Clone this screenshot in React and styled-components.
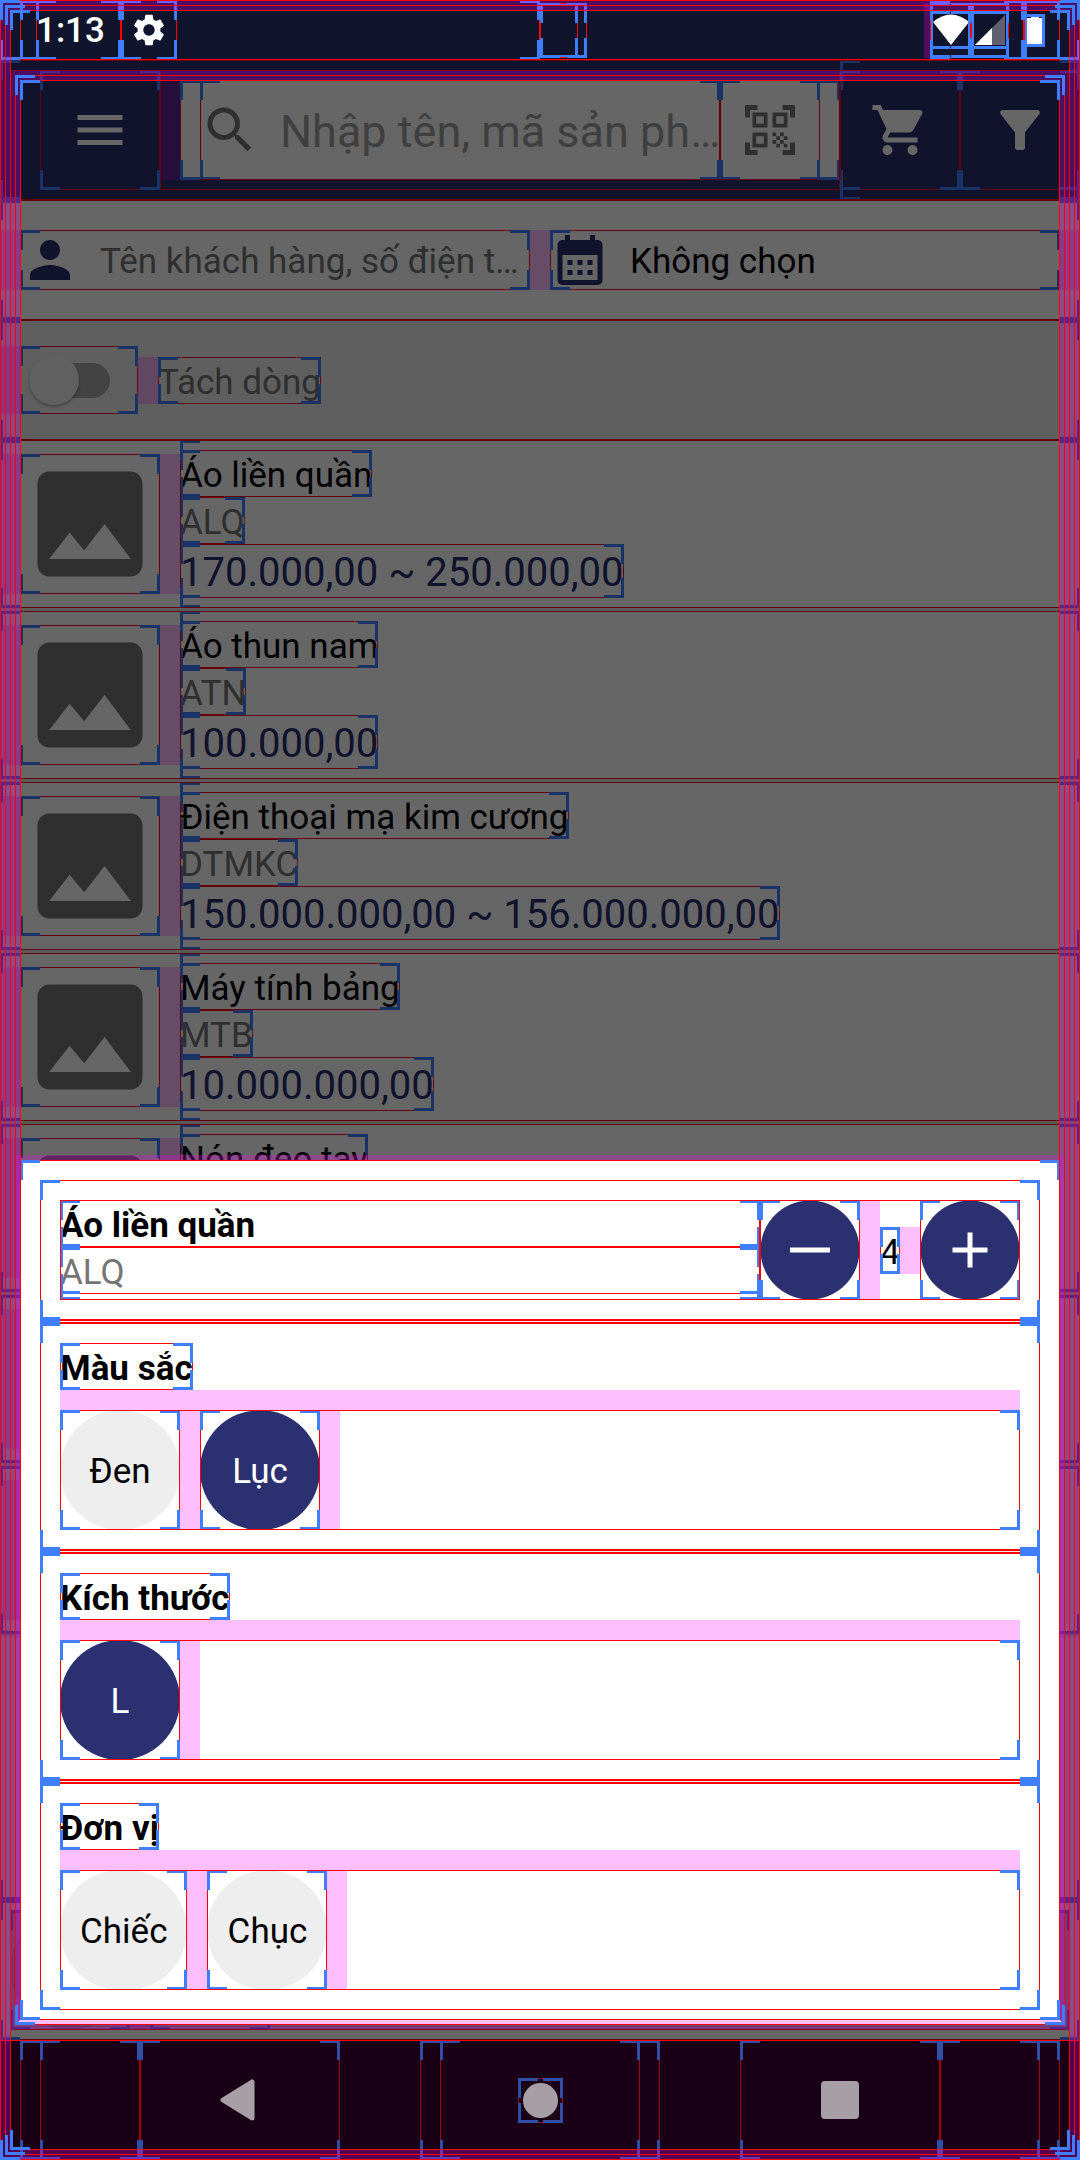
import React from 'react';
import styled, { css, createGlobalStyle } from 'styled-components';
import {
  MdMenu,
  MdSearch,
  MdQrCodeScanner,
  MdShoppingCart,
  MdFilterAlt,
  MdPerson,
  MdCalendarMonth,
  MdImage,
  MdAdd,
  MdSettings,
} from 'react-icons/md';

const NAVY = '#2b3071';
const GREY = '#757575';
const PINK = 'rgba(255, 0, 255, 0.25)';
const RED = '#ff0000';
const BLUE = '#3f7fff';

const patch = (color, place, size) =>
  `linear-gradient(${color}, ${color}) ${place} / ${size} no-repeat`;

const edges = (red) => [
  patch(red, 'left top', '100% 1px'),
  patch(red, 'left bottom', '100% 1px'),
  patch(red, 'left top', '1px 100%'),
  patch(red, 'right top', '1px 100%'),
];

const corners = ['left top', 'right top', 'left bottom', 'right bottom'].flatMap((place) => [
  patch(BLUE, place, '20px 3px'),
  patch(BLUE, place, '3px 20px'),
]);

/* Debug outline of a view: thin red edges with blue corner marks. */
const bounds = css`
  position: relative;
  &::after {
    content: '';
    position: absolute;
    inset: 0;
    pointer-events: none;
    background: ${[...corners, ...edges(RED)].join(', ')};
  }
`;

/* Outline with no corner marks. */
const outline = (red) => css`
  position: relative;
  &::after {
    content: '';
    position: absolute;
    inset: 0;
    pointer-events: none;
    background: ${edges(red).join(', ')};
  }
`;

const Global = createGlobalStyle`
  *, *::before, *::after { box-sizing: border-box; }
  body {
    margin: 0;
    background: #fff;
    color: #000;
    font: 400 35px/47px Roboto, "Noto Sans", sans-serif;
  }
  button, input {
    margin: 0;
    padding: 0;
    border: 0;
    background: none;
    color: inherit;
    font: inherit;
  }
  h2, p, ul { margin: 0; padding: 0; font: inherit; list-style: none; }
  svg { display: block; flex: none; }
`;

const Screen = styled.div`
  position: relative;
  display: grid;
  grid-template-rows: 60px minmax(0, 1fr) 120px;
  height: 100vh;
  overflow: hidden;
`;

/* ---------- status bar ---------- */

const StatusBar = styled.header`
  ${bounds}
  display: flex;
  align-items: center;
  padding: 0 20px;
  background: #11142d;
  color: #fff;
`;

const StatusLeft = styled.div`
  ${bounds}
  display: flex;
  flex: none;
  width: 50%;
  height: 60px;
  padding-left: 16px;
`;

const Clock = styled.div`
  ${bounds}
  width: 85px;
  font-weight: 500;
  line-height: 61px;
`;

const StatusIcon = styled.div`
  ${bounds}
  display: flex;
  align-items: center;
  justify-content: center;
  width: ${(p) => p.$width}px;
  height: ${(p) => p.$height}px;
`;

const Cutout = styled(StatusIcon)`
  justify-content: flex-start;
`;

const StatusRight = styled.div`
  display: flex;
  flex: 1;
  align-items: center;
  justify-content: flex-end;
`;

const SystemIcons = styled.div`
  ${bounds}
  display: flex;
  align-items: center;
  height: 60px;
  padding-right: 15px;
`;

const BatterySlot = styled.div`
  ${bounds}
  display: flex;
  align-items: center;
  width: 36px;
  height: 60px;
`;

/* ---------- page ---------- */

const Page = styled.main`
  position: relative;
  display: flex;
  flex-direction: column;
  min-height: 0;
  background: #fff;
`;

const Scrim = styled.div`
  position: absolute;
  inset: 0;
  background: rgba(0, 0, 0, 0.6);
`;

const Margin = styled.div`
  flex: none;
  width: ${(p) => (p.$width ? `${p.$width}px` : 'auto')};
  height: ${(p) => p.$height}px;
  background: ${PINK};
`;

const Toolbar = styled.div`
  ${bounds}
  display: flex;
  flex: none;
  align-items: center;
  height: 140px;
  padding-left: 40px;
  background: ${NAVY};
  color: #fff;
`;

const ToolButton = styled.button`
  ${bounds}
  display: flex;
  align-items: center;
  justify-content: center;
  width: ${(p) => p.$width || 120}px;
  height: ${(p) => p.$height || 120}px;
`;

const SearchArea = styled.div`
  ${outline(RED)}
  display: flex;
  flex: 1;
  align-items: center;
  min-width: 0;
  height: 120px;
`;

const SearchBox = styled.div`
  ${bounds}
  display: flex;
  flex: 1;
  min-width: 0;
  height: 100px;
  padding: 0 20px;
  background: #fff;
  color: ${GREY};
`;

const Field = styled.label`
  ${bounds}
  display: flex;
  flex: 1;
  align-items: center;
  gap: 20px;
  min-width: 0;
`;

const TextInput = styled.input`
  flex: 1;
  width: 100%;
  min-width: 0;
  height: 60px;
  margin-right: ${(p) => (p.$large ? -8 : 0)}px;
  padding-top: 2px;
  font-size: ${(p) => (p.$large ? 45 : 35)}px;
  text-overflow: ellipsis;
  outline: none;
  &::placeholder {
    color: ${(p) => (p.$large ? '#9e9e9e' : GREY)};
    opacity: 1;
  }
`;

const ToolGroup = styled.div`
  ${bounds}
  display: flex;
  align-items: center;
  height: 140px;
`;

const FilterRow = styled.div`
  ${bounds}
  display: flex;
  flex: none;
  align-items: center;
  height: 120px;
`;

const FilterCell = styled.div`
  display: flex;
  flex: 1;
  min-width: 0;
  height: 60px;
  & > label > svg,
  & > button > svg {
    color: ${NAVY};
  }
`;

const DateButton = styled.button`
  ${bounds}
  display: flex;
  flex: 1;
  align-items: center;
  gap: 20px;
  text-align: left;
  & > span {
    padding-top: 2px;
  }
`;

const ToggleRow = styled.div`
  ${bounds}
  display: flex;
  flex: none;
  align-items: center;
  height: 120px;
  background: #eee;
`;

const SwitchBox = styled.span`
  ${bounds}
  display: flex;
  align-items: center;
  width: 118px;
  height: 68px;
  padding-left: 9px;
`;

const Switch = styled.input`
  appearance: none;
  position: relative;
  width: 81px;
  height: 50px;
  &::before {
    content: '';
    position: absolute;
    inset: 8px 0 7px 20px;
    border-radius: 18px;
    background: #a8a8a8;
  }
  &::after {
    content: '';
    position: absolute;
    inset: 0 auto 0 0;
    width: 50px;
    border-radius: 50%;
    background: #f0f0f0;
    box-shadow: 0 2px 3px rgba(0, 0, 0, 0.28);
  }
`;

const Text = styled.p`
  ${bounds}
  width: ${(p) => (p.$fill ? 'auto' : 'fit-content')};
  padding-top: 4px;
  color: ${(p) => p.$color || '#000'};
  font-size: ${(p) => (p.$large ? 40 : 35)}px;
  font-weight: ${(p) => (p.$bold ? 700 : 400)};
  line-height: ${(p) => (p.$large ? 50 : 43)}px;
  white-space: nowrap;
`;

const List = styled.ul`
  ${bounds}
  flex: 1;
  min-height: 0;
  overflow: hidden;
`;

const Item = styled.li`
  ${bounds}
  display: flex;
  align-items: center;
  height: 168px;
  margin-bottom: 3px;
  background: #fff;
  box-shadow: 0 3px 0 #e0e0e0;
`;

const Picture = styled.div`
  ${bounds}
  color: ${GREY};
`;

const ItemBody = styled.div`
  ${bounds}
  flex: 1;
  align-self: stretch;
  padding: 10px 0;
`;

const Footer = styled.div`
  ${bounds}
  flex: none;
  height: 140px;
  padding: 10px;
`;

const FooterCard = styled.div`
  ${bounds}
  display: flex;
  height: 120px;
  background: #c6c6c6;
`;

const FooterButton = styled.div`
  ${bounds}
  width: 120px;
  height: 120px;
  & > span {
    display: block;
    height: 100%;
    border-radius: 50%;
    background: #aaa;
  }
`;

/* ---------- bottom sheet ---------- */

const SheetLayer = styled.div`
  position: absolute;
  inset: 0;
  display: flex;
  align-items: flex-end;
  padding: 0 15px 135px;
`;

const SheetEdge = styled.div`
  flex: 1;
  border: 5px solid ${PINK};
  border-bottom-color: #fff;
`;

const Sheet = styled.section`
  ${bounds}
  padding: 20px 20px 10px;
  background: #fff;
`;

const SheetCell = styled.div`
  ${bounds}
  padding: 20px;
`;

const Divider = styled.div`
  ${bounds}
  height: 3px;
  background: #eee;
  overflow: hidden;
`;

const HeadRow = styled.div`
  ${outline(RED)}
  display: flex;
  align-items: center;
`;

const HeadText = styled.div`
  ${bounds}
  flex: 1;
  height: 100px;
`;

const RoundButton = styled.button`
  ${bounds}
  display: flex;
  align-items: center;
  justify-content: center;
  width: 100px;
  height: 100px;
  color: #fff;
  background: radial-gradient(circle closest-side, ${NAVY} 49px, transparent 50px);
`;

const ChipRow = styled.div`
  ${bounds}
  display: flex;
`;

const Chip = styled.button`
  ${bounds}
  min-width: 120px;
  height: 120px;
  color: ${(p) => (p.$on ? '#fff' : '#000')};
  & > span {
    display: flex;
    align-items: center;
    justify-content: center;
    height: 120px;
    padding: 2px 20px 0;
    border-radius: 60px;
    background: ${(p) => (p.$on ? NAVY : '#eee')};
  }
`;

/* ---------- navigation bar ---------- */

const NavBar = styled.nav`
  ${outline(RED)}
  padding: 0 20px;
  background: #190016;
`;

const NavRow = styled.div`
  ${bounds}
  display: flex;
  justify-content: space-between;
  height: 120px;
  padding: 0 20px;
  opacity: 0.62;
`;

const NavSide = styled.div`
  display: flex;
`;

const NavSpace = styled.div`
  ${bounds}
  width: 100px;
`;

const NavCenter = styled.div`
  ${bounds}
  padding: 0 20px;
`;

const NavButton = styled.button`
  ${bounds}
  display: flex;
  align-items: center;
  justify-content: center;
  width: 200px;
  height: 120px;
  color: #fff;
`;

const HomeMark = styled.span`
  ${bounds}
  padding: 5px;
`;

/* ---------- window margins drawn over everything ---------- */

const WindowLayer = styled.div`
  position: absolute;
  inset: 0;
  display: flex;
  pointer-events: none;
`;

const Ring = styled.div`
  ${bounds}
  display: flex;
  flex: 1;
  border: 5px solid ${PINK};
  &::after {
    inset: -5px;
  }
`;

const FaintRing = styled(Ring)`
  &::after {
    background: ${edges('rgba(140, 0, 30, 0.9)').join(', ')};
  }
`;

const WindowFrame = styled.div`
  ${bounds}
  display: flex;
  flex: 1;
  padding: ${(p) => (p.$outer ? '60px 0 120px' : '0')};
`;

const products = [
  { name: 'Áo liền quần', code: 'ALQ', price: '170.000,00 ~ 250.000,00' },
  { name: 'Áo thun nam', code: 'ATN', price: '100.000,00' },
  { name: 'Điện thoại mạ kim cương', code: 'DTMKC', price: '150.000.000,00 ~ 156.000.000,00' },
  { name: 'Máy tính bảng', code: 'MTB', price: '10.000.000,00' },
  { name: 'Nón đeo tay' },
  {},
  {},
];

const options = [
  { title: 'Màu sắc', values: ['Đen', 'Lục'], selected: 'Lục' },
  { title: 'Kích thước', values: ['L'], selected: 'L' },
  { title: 'Đơn vị', values: ['Chiếc', 'Chục'] },
];

function Status() {
  return (
    <StatusBar>
      <StatusLeft>
        <Clock>1:13</Clock>
        <StatusIcon $width={56} $height={60}>
          <MdSettings size={38} />
        </StatusIcon>
      </StatusLeft>
      <Cutout $width={47} $height={55}>
        <StatusIcon $width={38} $height={55} />
      </Cutout>
      <StatusRight>
        <Margin $width={6} $height={55} />
        <SystemIcons>
          <StatusIcon $width={41} $height={55}>
            <StatusIcon $width={41} $height={38}>
              <svg width="36" height="32" viewBox="0 0 36 32" fill="#fff">
                <path d="M0 8Q18-7 36 8L18 31Z" />
              </svg>
            </StatusIcon>
          </StatusIcon>
          <StatusIcon $width={38} $height={55}>
            <StatusIcon $width={38} $height={38}>
              <svg width="30" height="30" viewBox="0 0 30 30">
                <path d="M0 30L30 0V30Z" fill="#5e5f70" />
                <path d="M0 30L17 13V30Z" fill="#fff" />
              </svg>
            </StatusIcon>
          </StatusIcon>
        </SystemIcons>
        <BatterySlot>
          <StatusIcon $width={21} $height={33}>
            <svg width="16" height="28" viewBox="0 0 16 28" fill="#fff">
              <path d="M0 2H4V0H12V2H16V28H0Z" />
            </svg>
          </StatusIcon>
        </BatterySlot>
      </StatusRight>
    </StatusBar>
  );
}

function ProductItem({ name, code, price }) {
  return (
    <Item>
      <Margin $width={20} $height={140} />
      <Picture>
        <MdImage size={140} />
      </Picture>
      <Margin $width={20} $height={140} />
      <ItemBody>
        {name && <Text>{name}</Text>}
        {code && <Text $color={GREY}>{code}</Text>}
        {price && (
          <Text $large $color={NAVY}>
            {price}
          </Text>
        )}
      </ItemBody>
    </Item>
  );
}

function OptionCell({ title, values, selected }) {
  return (
    <SheetCell>
      <Text as="h2" $bold>
        {title}
      </Text>
      <Margin $height={20} />
      <ChipRow>
        {values.map((value) => (
          <React.Fragment key={value}>
            <Chip type="button" $on={value === selected} aria-pressed={value === selected}>
              <span>{value}</span>
            </Chip>
            <Margin $width={20} $height={120} />
          </React.Fragment>
        ))}
      </ChipRow>
    </SheetCell>
  );
}

export default function App() {
  return (
    <Screen>
      <Global />
      <Status />
      <Page>
        <Toolbar>
          <ToolButton type="button" aria-label="Menu">
            <MdMenu size={60} />
          </ToolButton>
          <SearchArea>
            <Margin $width={20} $height={100} />
            <SearchBox>
              <Field>
                <MdSearch size={60} />
                <TextInput $large type="text" placeholder="Nhập tên, mã sản phẩm" />
              </Field>
              <ToolButton type="button" $width={100} $height={100} aria-label="QR">
                <MdQrCodeScanner size={60} />
              </ToolButton>
            </SearchBox>
          </SearchArea>
          <ToolGroup>
            <ToolButton type="button" aria-label="Giỏ hàng">
              <MdShoppingCart size={60} />
            </ToolButton>
            <ToolButton type="button" aria-label="Lọc">
              <MdFilterAlt size={60} />
            </ToolButton>
          </ToolGroup>
        </Toolbar>

        <FilterRow>
          <Margin $width={20} $height={60} />
          <FilterCell>
            <Field>
              <MdPerson size={60} />
              <TextInput type="text" placeholder="Tên khách hàng, số điện thoại" />
            </Field>
          </FilterCell>
          <Margin $width={20} $height={60} />
          <FilterCell>
            <DateButton type="button">
              <MdCalendarMonth size={60} />
              <span>Không chọn</span>
            </DateButton>
          </FilterCell>
          <Margin $width={20} $height={60} />
        </FilterRow>

        <ToggleRow>
          <Margin $width={20} $height={68} />
          <SwitchBox>
            <Switch type="checkbox" id="split-lines" />
          </SwitchBox>
          <Margin $width={20} $height={47} />
          <Text as="label" htmlFor="split-lines" $color={GREY}>
            Tách dòng
          </Text>
        </ToggleRow>

        <List>
          {products.map((product, i) => (
            <ProductItem key={i} {...product} />
          ))}
        </List>

        <Footer>
          <FooterCard>
            <FooterButton>
              <span />
            </FooterButton>
            <Margin $width={20} $height={120} />
            <FooterButton />
          </FooterCard>
        </Footer>
        <Scrim />
      </Page>

      <NavBar>
        <NavRow>
          <NavSide>
            <NavSpace />
            <NavButton type="button" aria-label="Back">
              <svg width="44" height="44" viewBox="0 0 44 44">
                <path
                  d="M34 4V40L5 22Z"
                  fill="#fff"
                  stroke="#fff"
                  strokeWidth="5"
                  strokeLinejoin="round"
                />
              </svg>
            </NavButton>
          </NavSide>
          <NavCenter>
            <NavButton type="button" aria-label="Home">
              <HomeMark>
                <svg width="35" height="35" viewBox="0 0 35 35" fill="#fff">
                  <circle cx="17.5" cy="17.5" r="17.5" />
                </svg>
              </HomeMark>
            </NavButton>
          </NavCenter>
          <NavSide>
            <NavButton type="button" aria-label="Recents">
              <svg width="38" height="38" viewBox="0 0 38 38" fill="#fff">
                <rect width="38" height="38" rx="4" />
              </svg>
            </NavButton>
            <NavSpace />
          </NavSide>
        </NavRow>
      </NavBar>

      <SheetLayer>
        <SheetEdge>
          <Sheet>
            <SheetCell>
              <HeadRow>
                <HeadText>
                  <Text as="h2" $bold $fill>
                    Áo liền quần
                  </Text>
                  <Text $fill $color={GREY}>
                    ALQ
                  </Text>
                </HeadText>
                <RoundButton type="button" aria-label="Giảm">
                  <svg width="60" height="60" viewBox="0 0 24 24" fill="currentColor">
                    <path d="M4 11H20V13H4Z" />
                  </svg>
                </RoundButton>
                <Margin $width={20} $height={100} />
                <Text as="output">4</Text>
                <Margin $width={20} $height={47} />
                <RoundButton type="button" aria-label="Tăng">
                  <MdAdd size={60} />
                </RoundButton>
              </HeadRow>
            </SheetCell>
            {options.map((option) => (
              <React.Fragment key={option.title}>
                <Divider />
                <OptionCell {...option} />
              </React.Fragment>
            ))}
          </Sheet>
        </SheetEdge>
      </SheetLayer>

      <WindowLayer>
        <Ring>
          <Ring>
            <WindowFrame $outer>
              <FaintRing>
                <Ring>
                  <WindowFrame />
                </Ring>
              </FaintRing>
            </WindowFrame>
          </Ring>
        </Ring>
      </WindowLayer>
    </Screen>
  );
}
